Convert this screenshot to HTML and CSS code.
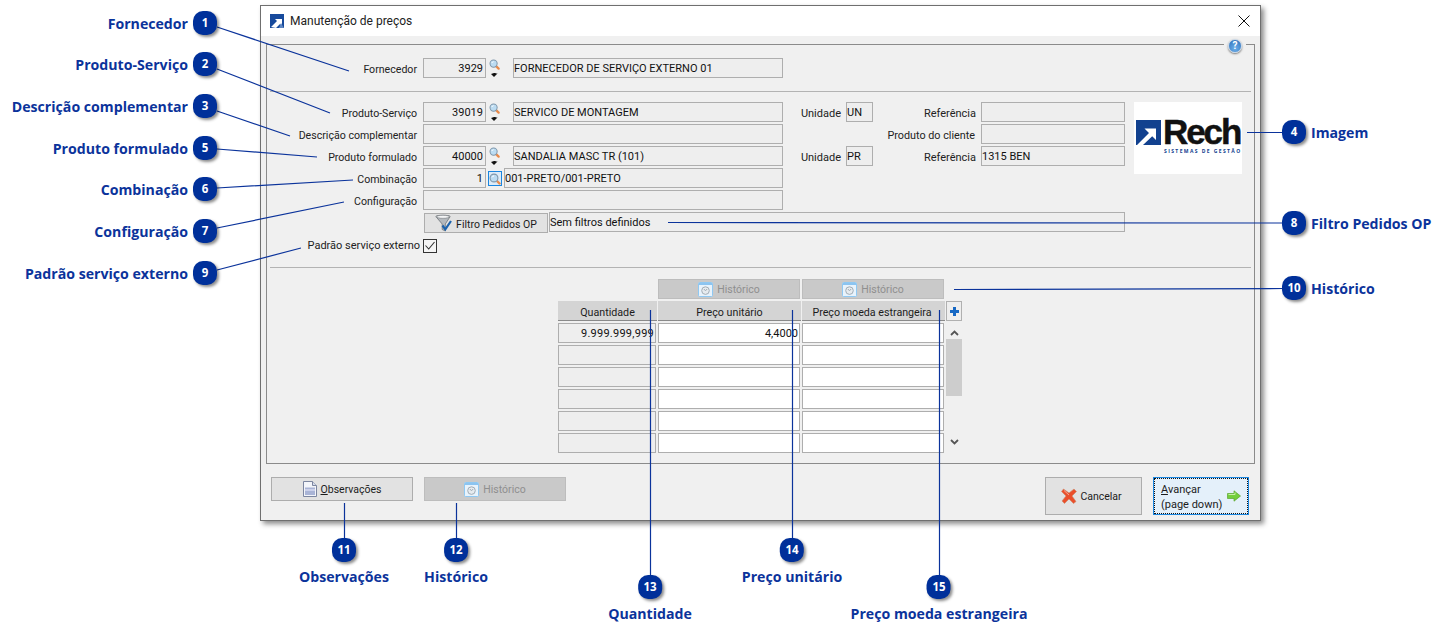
FILE: index.html
```html
<!DOCTYPE html>
<html lang="pt-BR">
<head>
<meta charset="utf-8">
<title>Manutenção de preços</title>
<link rel="stylesheet" href="styles.css">
</head>
<body>
<svg class="defs" width="0" height="0" aria-hidden="true">
  <defs>
    <symbol id="i-search" viewBox="0 0 12 12">
      <path d="M7.5 7.5l3 3" stroke="#e98a4a" stroke-width="2.4" stroke-linecap="round"/>
      <circle cx="5" cy="5" r="3.9" fill="#bcdcf2" stroke="#7f97ab" stroke-width="1.1"/>
      <path d="M3 4.4a2.4 2.4 0 0 1 2-1.5" stroke="#fff" fill="none"/>
    </symbol>
    <symbol id="i-clock" viewBox="0 0 15 15">
      <rect x=".5" y=".5" width="14" height="14" rx="1" fill="#e8f3fc" stroke="#8fc8f2"/>
      <rect x="1" y="1" width="13" height="2" fill="#8cc4f0"/>
      <circle cx="7.5" cy="8.6" r="3.8" fill="#e6ebef" stroke="#a2adb6"/>
      <path d="M5.900 7l1.600 1.800L9.100 7" stroke="#a2adb6" fill="none"/>
    </symbol>
  </defs>
</svg>
<main class="canvas">

  <section class="window">
    <header class="titlebar">
      <svg class="app-icon" width="14" height="14" viewBox="0 0 14 14"><rect width="14" height="14" fill="#174a9c"/><path d="M1 13l6-6-2-2h7v7l-2-2-4 4" fill="#fff"/><path d="M9 14l2-5 3 5z" fill="#5f87c3"/></svg>
      <h1 class="window-title">Manutenção de preços</h1>
      <svg class="close" width="12" height="12" viewBox="0 0 12 12"><path d="M.5.5l11 11M11.5.5l-11 11" stroke="#111" stroke-width="1"/></svg>
    </header>

    <div class="group">
      <span class="help-gap"><span class="help">?</span></span>

      <div class="form-grid first">
        <label class="lbl">Fornecedor</label>
        <div class="field num">3929</div>
        <div class="lookup"><svg class="ic-search" width="11" height="11"><use href="#i-search"/></svg><span class="drop"></span></div>
        <div class="field">FORNECEDOR DE SERVIÇO EXTERNO 01</div>
      </div>
      <hr class="sep">

      <div class="form-grid second">
        <label class="lbl">Produto-Serviço</label>
        <div class="field num">39019</div>
        <div class="lookup"><svg class="ic-search" width="11" height="11"><use href="#i-search"/></svg><span class="drop"></span></div>
        <div class="field">SERVICO DE MONTAGEM</div>
        <label class="lbl short">Unidade</label>
        <div class="field">UN</div>
        <label class="lbl short">Referência</label>
        <div class="field"></div>
        <div class="logo">
          <div class="logo-main">
            <svg class="logo-mark" width="25" height="25" viewBox="0 0 25 25"><rect width="25" height="25" fill="#12418f"/><path d="M1 25L13 13 8.5 8.5H20v11.500l-3.800-3.800L7 25z" fill="#fff"/></svg>
            <span class="logo-word">Rech</span>
          </div>
          <span class="logo-sub">SISTEMAS DE GESTÃO</span>
        </div>

        <label class="lbl">Descrição complementar</label>
        <div class="field span3"></div>
        <label class="lbl wide">Produto do cliente</label>
        <div class="field"></div>

        <label class="lbl">Produto formulado</label>
        <div class="field num">40000</div>
        <div class="lookup"><svg class="ic-search" width="11" height="11"><use href="#i-search"/></svg><span class="drop"></span></div>
        <div class="field">SANDALIA MASC TR (101)</div>
        <label class="lbl short">Unidade</label>
        <div class="field">PR</div>
        <label class="lbl short">Referência</label>
        <div class="field">1315 BEN</div>

        <label class="lbl">Combinação</label>
        <div class="field num">1</div>
        <div class="combo-wrap">
          <span class="lookup-btn"><svg width="12" height="12"><use href="#i-search"/></svg></span>
          <div class="field grow">001-PRETO/001-PRETO</div>
        </div>

        <label class="lbl">Configuração</label>
        <div class="field span3"></div>

        <div class="filter-wrap">
          <button class="btn filter-btn" type="button">
            <svg width="18" height="18" viewBox="0 0 18 18"><path d="M.8 2.500C.8 .8 15.200 .8 15.200 2.500L10.300 10v7L7.200 15.500V10z" fill="#b4b9be" stroke="#6e7479" stroke-width=".8"/><ellipse cx="8" cy="2.800" rx="6.300" ry="1.500" fill="#f4f5f6" stroke="#7d8287" stroke-width=".6"/><path d="M7.500 11.500l2.800 3.800L16 7" stroke="#1d63ad" stroke-width="2.200" fill="none"/></svg>
            <span>Filtro Pedidos OP</span>
          </button>
          <div class="field grow">Sem filtros definidos</div>
        </div>
      </div>

      <div class="check-row">
        <label class="lbl check-lbl">Padrão serviço externo</label>
        <svg class="check" width="14" height="14" viewBox="0 0 14 14"><rect x=".5" y=".5" width="13" height="13" fill="#f4f4f4" stroke="#333"/><path d="M2.500 6.500l3.200 3.500 5.800-7" stroke="#333" stroke-width="1.100" fill="none"/></svg>
      </div>
      <hr class="sep sep-low">

      <div class="table-grid">
        <div class="blank"></div>
        <button class="btn disabled tbl-hist" type="button"><svg width="15" height="15"><use href="#i-clock"/></svg><span>Histórico</span></button>
        <button class="btn disabled tbl-hist" type="button"><svg width="15" height="15"><use href="#i-clock"/></svg><span>Histórico</span></button>
        <div class="blank"></div>

        <div class="th">Quantidade</div>
        <div class="th">Preço unitário</div>
        <div class="th th-last">Preço moeda estrangeira</div>
        <button class="plus" type="button"><svg width="11" height="11" viewBox="0 0 11 11"><path d="M5.500 1v9M1 5.500h9" stroke="#1668c4" stroke-width="3"/></svg></button>

        <div class="td ro right spaced">9.999.999,999</div><div class="td right">4,4000</div><div class="td"></div>
        <div class="scroll">
          <svg class="chev" width="9" height="6" viewBox="0 0 9 6"><path d="M1 5l3.500-3.500L8 5" stroke="#555" stroke-width="1.800" fill="none"/></svg>
          <div class="thumb"></div>
          <svg class="chev chev-down" width="9" height="6" viewBox="0 0 9 6"><path d="M1 1l3.500 3.500L8 1" stroke="#555" stroke-width="1.800" fill="none"/></svg>
        </div>
        <div class="td ro"></div><div class="td"></div><div class="td"></div>
        <div class="td ro"></div><div class="td"></div><div class="td"></div>
        <div class="td ro"></div><div class="td"></div><div class="td"></div>
        <div class="td ro"></div><div class="td"></div><div class="td"></div>
        <div class="td ro"></div><div class="td"></div><div class="td"></div>
      </div>
    </div>

    <footer class="bottom">
      <button class="btn foot" type="button">
        <svg width="14" height="16" viewBox="0 0 14 16"><path d="M.5.500h9l4 4v11H.5z" fill="#f3f5fa" stroke="#7c86a0"/><path d="M9.500.500v4h4" fill="#d6dcea" stroke="#7c86a0"/><rect x="2" y="6.500" width="10" height="7.500" fill="#a9b4d6"/><path d="M2 9h10" stroke="#eef" /></svg>
        <span><u>O</u>bservações</span>
      </button>
      <button class="btn foot disabled" type="button"><svg width="15" height="15"><use href="#i-clock"/></svg><span>Histórico</span></button>
      <button class="btn tall cancel" type="button">
        <svg width="16" height="16" viewBox="0 0 16 16"><path d="M2.500 1L8 5l5-4 2.500 2.500L11 8l4 5.500L12.500 15.500 8 11l-4.500 4.500L1 13l4-5L.5 3.500z" fill="#ea4f2c" stroke="#c98a6a" stroke-width=".6"/><path d="M3 2.500L8 7" stroke="#f6a78c"/></svg>
        <span>Cancelar</span>
      </button>
      <button class="btn tall next" type="button">
        <span class="next-text"><span><u>A</u>vançar</span><span>(page down)</span></span>
        <svg width="14" height="12" viewBox="0 0 14 12"><path d="M.5 3.500h6.500V.8L13.500 6 7 11.200V8.500H.5z" fill="#74cf3c" stroke="#5aa32f" stroke-width=".7"/><path d="M1.500 4.500h6.500V2.500" stroke="#c6f0a5" fill="none"/></svg>
      </button>
    </footer>
  </section>

  <svg class="leaders" width="1449" height="641" viewBox="0 0 1449 641" aria-hidden="true">
    <path d="M217 27L349 71M217 69L330 113M217 111L290 136M217 149L317 157M217 188L353 180M217 228L344 202M217 270L301 248M1247 132.500H1283M668 222.500L1283 223M954 289.500L1283 288.500M344.500 503V539M456.500 503V539M650.500 310V576M792.500 310V539M939.500 310V576"/>
  </svg>

  <div class="callout left t1"><span class="badge">1</span><span class="name">Fornecedor</span></div>
  <div class="callout left t2"><span class="badge">2</span><span class="name">Produto-Serviço</span></div>
  <div class="callout left t3"><span class="badge">3</span><span class="name">Descrição complementar</span></div>
  <div class="callout left t5"><span class="badge">5</span><span class="name">Produto formulado</span></div>
  <div class="callout left t6"><span class="badge">6</span><span class="name">Combinação</span></div>
  <div class="callout left t7"><span class="badge">7</span><span class="name">Configuração</span></div>
  <div class="callout left t9"><span class="badge">9</span><span class="name">Padrão serviço externo</span></div>
  <div class="callout right t4"><span class="badge">4</span><span class="name">Imagem</span></div>
  <div class="callout right t8"><span class="badge">8</span><span class="name">Filtro Pedidos OP</span></div>
  <div class="callout right t10"><span class="badge">10</span><span class="name">Histórico</span></div>
  <div class="callout below b11"><span class="badge">11</span><span class="name">Observações</span></div>
  <div class="callout below b12"><span class="badge">12</span><span class="name">Histórico</span></div>
  <div class="callout below b13"><span class="badge">13</span><span class="name">Quantidade</span></div>
  <div class="callout below b14"><span class="badge">14</span><span class="name">Preço unitário</span></div>
  <div class="callout below b15"><span class="badge">15</span><span class="name">Preço moeda estrangeira</span></div>
</main>
</body>
</html>
```
FILE: styles.css
```css
* { box-sizing: border-box; }
html, body { margin: 0; padding: 0; background: #fff; }
body { font-family: Roboto, "Open Sans", sans-serif; color: #1c1c1c; font-size: 11px; }
.defs { position: absolute; }
.canvas { position: relative; width: 1449px; height: 641px; overflow: hidden; background: #fff; }

/* window */
.window {
  position: absolute; left: 260px; top: 5px; width: 1001px; height: 516px;
  display: flex; flex-direction: column;
  background: #f0f0f0; border: 1px solid #6f6f6f;
  box-shadow: 3px 3px 5px rgba(0,0,0,.45);
}
.titlebar { height: 30px; flex: none; background: #fff; display: flex; align-items: center; padding: 0 10px 1px 9px; }
.app-icon { flex: none; margin-right: 6px; }
.window-title { margin: 0; flex: 1; font-weight: 400; font-size: 12px; color: #222; }
.close { flex: none; }

.group {
  position: relative; flex: none; height: 420px; margin: 8px 5px 0 5px;
  border: 1px solid #8b8b8b; padding: 0 3px;
}
.help-gap { position: absolute; right: 8px; top: -2px; width: 22px; height: 4px; background: #f0f0f0; }
.help {
  position: absolute; left: 4px; top: -4px; width: 14px; height: 14px; border-radius: 50%;
  background: radial-gradient(circle at 50% 70%, #6db0ea, #2a6cb8); border: 1px solid #c9d7e6;
  box-shadow: 0 1px 2px rgba(0,0,0,.5);
  color: #fff; font-weight: 700; font-size: 10px; line-height: 12px; text-align: center;
}
.sep { height: 1px; border: 0; margin: 13px 0 0; background: #b3b3b3; width: 981px; }
.sep-low { margin-top: 14px; }

/* form */
.form-grid {
  display: grid;
  grid-template-columns: 153px 63px 27px 270px 63px 27px 108px 144px 117px;
  grid-auto-rows: 20px; row-gap: 2px;
}
.first { padding-top: 13px; }
.second { margin-top: 10px; }
.lbl { grid-column: 1; text-align: right; line-height: 23px; padding-right: 6px; white-space: nowrap; font-size: 10.600px; color: #222; }
.short { grid-column: auto; padding-right: 5px; font-size: 11px; }
.wide { grid-column: 5 / span 3; font-size: 10.800px; }
.field {
  height: 20px; border: 1px solid #aeaeae; background: #eeeeee; line-height: 19px;
  font-size: 11px; color: #111; white-space: nowrap; overflow: hidden; padding: 0;
}
.num { text-align: right; padding: 0 2px 0 0; }
.span3 { grid-column: span 3; }
.grow { flex: 1; }
.lookup { position: relative; display: flex; flex-direction: column; align-items: flex-start; padding-left: 3px; }
.ic-search { display: block; margin-top: 1px; }
.drop {
  display: block; margin: 3px 0 0 2px; width: 7px; height: 4px;
  border-top: 1px solid #111; border-left: 3.500px solid transparent; border-right: 3.500px solid transparent;
  position: relative;
}
.drop::after { content: ""; position: absolute; left: -3px; top: 0; border-top: 3px solid #111; border-left: 3px solid transparent; border-right: 3px solid transparent; }
.combo-wrap { grid-column: span 2; display: flex; align-items: flex-start; gap: 2px; padding-left: 2px; }
.lookup-btn {
  flex: none; width: 14px; height: 15px; margin-top: 3px; display: flex; align-items: center; justify-content: center;
  border: 1px solid #1a86e0; background: #dcebf8;
}
.filter-wrap { grid-column: 2 / span 7; display: flex; align-items: flex-start; margin-left: 1px; gap: 1px; width: 701px; }

.check-row { display: flex; align-items: center; height: 14px; margin-top: 7px; }
.check-lbl { width: 153px; padding-right: 3px; line-height: 16px; font-size: 11px; }
.check { flex: none; }

.logo {
  grid-column: 9; grid-row: 1 / span 4; margin-left: 9px; width: 108px; height: 72px; background: #fff;
  display: flex; flex-direction: column; padding: 16px 2px 0 2px;
}
.logo-main { display: flex; align-items: flex-end; height: 27px; }
.logo-mark { flex: none; }
.logo-word {
  font: 700 35px/27px "Liberation Sans", sans-serif; color: #111; letter-spacing: -2.100px; margin-left: 2px; height: 27px;
  -webkit-text-stroke: .5px #111;
}
.logo-sub { font: 700 5px/7px "Open Sans", sans-serif; color: #12418f; letter-spacing: 1.400px; margin-left: 28px; white-space: nowrap; margin-top: 3px; }

/* buttons */
.btn {
  font: 400 10.500px Roboto, sans-serif; color: #1c1c1c; background: #e2e2e2; border: 1px solid #adadad;
  display: flex; align-items: center; justify-content: center; gap: 4px; padding: 0; white-space: nowrap;
}
.btn span { padding-top: 1px; }
.disabled { background: #c9c9c9; border-color: #bdbdbd; color: #8f8f8f; }
.filter-btn { width: 124px; height: 20px; flex: none; margin-top: 1px; padding-right: 0; gap: 3px; }
.filter-btn span { padding-top: 3px; }

/* table */
.table-grid {
  display: grid; margin: 11px 0 0 288px; width: 405px;
  grid-template-columns: 100px 144px 144px 17px; grid-auto-rows: 20px; row-gap: 2px;
}
.blank { height: 20px; }
.tbl-hist { width: 142px; height: 20px; }
.th {
  background: #d4d4d4; border-bottom: 1px solid #8a8a8a; text-align: center; line-height: 23px;
  margin-right: 1px; font-size: 10.700px;
}
.th-last { padding-right: 3px; }
.plus {
  width: 16px; height: 20px; padding: 0; background: #eee; border: 1px solid #b0b0b0;
  display: flex; align-items: center; justify-content: center;
}
.td { background: #fff; border: 1px solid #aeaeae; height: 20px; margin-right: 2px; line-height: 19px; font-size: 11px; color: #111; padding-right: 1px; white-space: nowrap; }
.ro { background: #eee; }
.right { text-align: right; }
.spaced { letter-spacing: .25px; }
.scroll { grid-column: 4; grid-row: 3 / span 6; display: flex; flex-direction: column; align-items: center; width: 16px; padding-top: 7px; }
.chev { flex: none; }
.thumb { width: 16px; height: 57px; background: #cdcdcd; margin-top: 3px; flex: none; }
.chev-down { margin-top: 43px; }

/* bottom bar */
.bottom { flex: 1; display: flex; align-items: flex-start; padding: 13px 11px 0 10px; }
.foot { width: 142px; height: 24px; margin-right: 11px; }
.tall { height: 38px; }
.cancel { width: 97px; margin-left: auto; gap: 3px; padding-right: 4px; }
.next { width: 96px; margin-left: 11px; background: #e4f0fa; border: 1px solid #1a86e0; outline: 1px dotted #111; outline-offset: -2px; justify-content: flex-start; padding-left: 7px; gap: 5px; font-size: 11px; }
.next-text { display: flex; flex-direction: column; align-items: flex-start; line-height: 14px; }

/* callouts */
.leaders { position: absolute; left: 0; top: 0; pointer-events: none; }
.leaders path { fill: none; stroke: #0b339b; stroke-width: 1.200; }
.callout { position: absolute; display: flex; align-items: center; gap: 5px; }
.badge {
  flex: none; width: 24px; height: 24px; border-radius: 10px; background: #00309a; color: #fff;
  font: 700 11.500px/24px "Open Sans", sans-serif; text-align: center;
  box-shadow: 2px 2px 3px rgba(0,0,0,.45);
}
.name { font: 700 14.150px/20px "Open Sans", sans-serif; color: #0b339b; white-space: nowrap; padding-top: 1px; }
.left { right: 1232px; flex-direction: row-reverse; }
.right.callout { left: 1282px; }
.below { flex-direction: column; transform: translateX(-50%); gap: 5px; }
.below .name { padding-top: 0; }
.t1 { top: 11px; } .t2 { top: 52px; } .t3 { top: 94px; } .t5 { top: 136px; }
.t6 { top: 177px; } .t7 { top: 219px; } .t9 { top: 261px; }
.t4 { top: 120px; } .t8 { top: 211px; } .t10 { top: 276px; }
.b11 { left: 344px; top: 538px; } .b12 { left: 456px; top: 538px; }
.b13 { left: 650px; top: 575px; } .b14 { left: 792px; top: 538px; } .b15 { left: 939px; top: 575px; }
```
